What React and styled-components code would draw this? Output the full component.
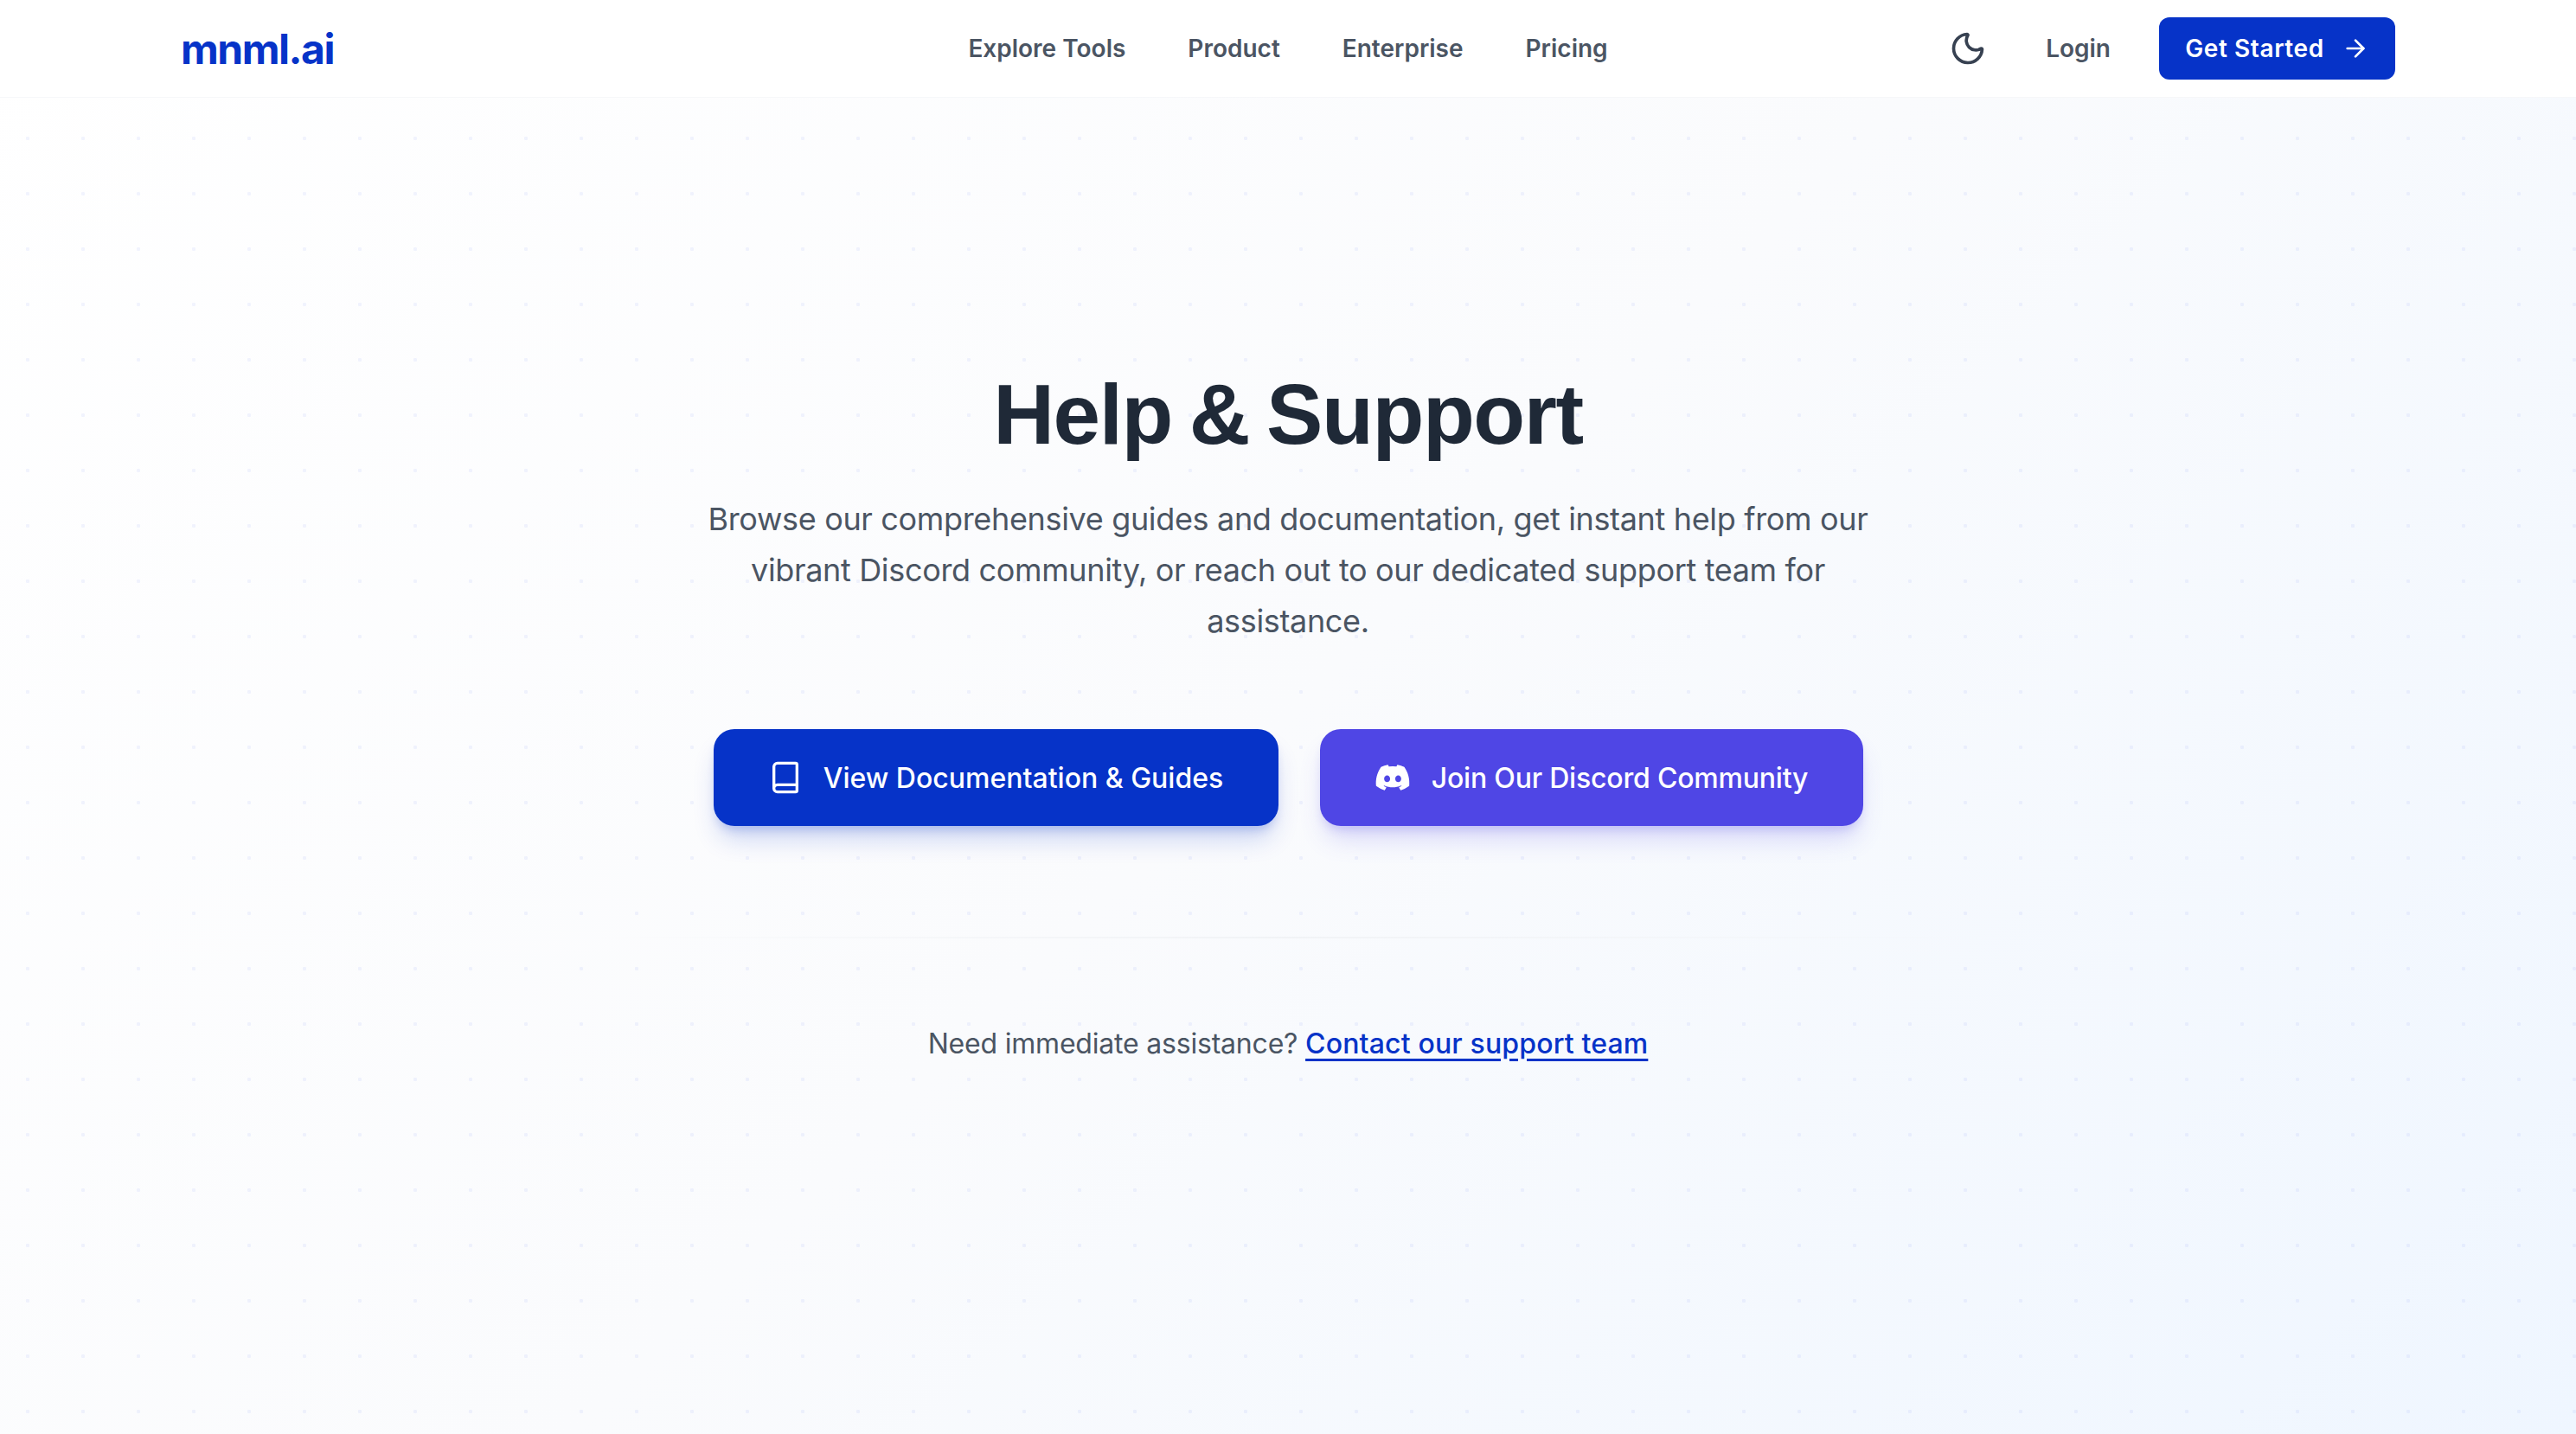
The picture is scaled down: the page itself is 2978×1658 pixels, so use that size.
import React from 'react'
import styled, { createGlobalStyle } from 'styled-components'
import { Moon, ArrowRight, Book } from 'lucide-react'
import { FaDiscord } from 'react-icons/fa'

const Global = createGlobalStyle`
  html, body { margin: 0; padding: 0; }
  body { font-family: "Inter", "Liberation Sans", sans-serif; }
  * { box-sizing: border-box; }
`

const Page = styled.div`
  width: 2978px;
  height: 1658px;
  overflow: hidden;
  display: flex;
  flex-direction: column;
  background: linear-gradient(135deg, #ffffff 0%, #fafbfd 50%, #eff6ff 100%);
`

const Header = styled.header`
  height: 113px;
  flex: none;
  background: #ffffff;
  border-bottom: 1px solid #f6f7f9;
  display: flex;
  justify-content: center;
`

const HeaderInner = styled.div`
  width: 2560px;
  display: grid;
  grid-template-columns: 1fr auto 1fr;
  align-items: center;
`

const Logo = styled.div`
  font-size: 48px;
  font-weight: 700;
  letter-spacing: -1.5px;
  color: #0633c8;
`

const Nav = styled.nav`
  display: flex;
  gap: 72px;
`

const NavLink = styled.a`
  font-size: 28px;
  font-weight: 600;
  color: #4b5563;
`

const Actions = styled.div`
  display: flex;
  align-items: center;
  justify-content: flex-end;
  gap: 56px;
  svg { display: block; }
`

const ThemeToggle = styled.span`
  color: #374151;
  margin-right: 12px;
`

const GetStarted = styled.a`
  width: 273px;
  height: 72px;
  border-radius: 12px;
  background: #0633c8;
  color: #ffffff;
  font-size: 28px;
  font-weight: 600;
  letter-spacing: 0.6px;
  display: flex;
  align-items: center;
  justify-content: center;
  gap: 20px;
`

const Main = styled.main`
  flex: 1;
  display: flex;
  flex-direction: column;
  align-items: center;
  padding-top: 318px;
  background-image: radial-gradient(circle, rgba(37, 70, 235, 0.06) 2px, transparent 2.5px);
  background-size: 64px 64px;
  background-position: 0 -113px;
`

const Title = styled.h1`
  margin: 0;
  font-family: "Liberation Sans", sans-serif;
  font-size: 98px;
  line-height: 96px;
  font-weight: 700;
  letter-spacing: -1.4px;
  word-spacing: -6px;
  color: #1f2937;
`

const Lead = styled.p`
  margin: 44px 0 0;
  width: 1400px;
  text-align: center;
  font-size: 36px;
  line-height: 59px;
  letter-spacing: -0.34px;
  color: #4b5563;
`

const Buttons = styled.div`
  margin-top: 95px;
  display: flex;
  gap: 48px;
`

const CtaButton = styled.a`
  height: 112px;
  width: ${(p) => p.$width}px;
  border-radius: 24px;
  background: ${(p) => p.$bg};
  color: #ffffff;
  font-size: 32px;
  font-weight: 500;
  letter-spacing: ${(p) => p.$tracking || 0}px;
  display: flex;
  align-items: center;
  justify-content: center;
  gap: 24px;
  box-shadow: 0 20px 30px -6px ${(p) => p.$shadow}, 0 8px 12px -4px ${(p) => p.$shadow};
`

const Divider = styled.div`
  margin-top: 128px;
  width: 1600px;
  height: 2px;
  background: linear-gradient(90deg, transparent, #f1f3f6 50%, transparent);
`

const Assist = styled.p`
  margin: 98px 0 0;
  font-size: 32px;
  line-height: 48px;
  letter-spacing: -0.2px;
  color: #4b5563;
`

const SupportLink = styled.a`
  color: #0633c8;
  font-weight: 500;
  letter-spacing: 0.15px;
  text-decoration: underline;
  text-underline-offset: 6px;
`

export default function App() {
  return (
    <Page>
      <Global />
      <Header>
        <HeaderInner>
          <Logo>mnml.ai</Logo>
          <Nav>
            <NavLink>Explore Tools</NavLink>
            <NavLink>Product</NavLink>
            <NavLink>Enterprise</NavLink>
            <NavLink>Pricing</NavLink>
          </Nav>
          <Actions>
            <ThemeToggle><Moon size={44} strokeWidth={2} /></ThemeToggle>
            <NavLink>Login</NavLink>
            <GetStarted>Get Started <ArrowRight size={32} strokeWidth={2} /></GetStarted>
          </Actions>
        </HeaderInner>
      </Header>
      <Main>
        <Title>Help &amp; Support</Title>
        <Lead>
          Browse our comprehensive guides and documentation, get instant help from our vibrant Discord community, or reach out to our dedicated support team for assistance.
        </Lead>
        <Buttons>
          <CtaButton $width={653} $bg="#0633c8" $shadow="rgba(6,51,200,0.2)">
            <Book size={40} strokeWidth={2} /> View Documentation &amp; Guides
          </CtaButton>
          <CtaButton $width={628} $bg="#4f46e5" $shadow="rgba(79,70,229,0.2)" $tracking={-0.2}>
            <FaDiscord size={42} /> Join Our Discord Community
          </CtaButton>
        </Buttons>
        <Divider />
        <Assist>
          Need immediate assistance? <SupportLink>Contact our support team</SupportLink>
        </Assist>
      </Main>
    </Page>
  )
}
